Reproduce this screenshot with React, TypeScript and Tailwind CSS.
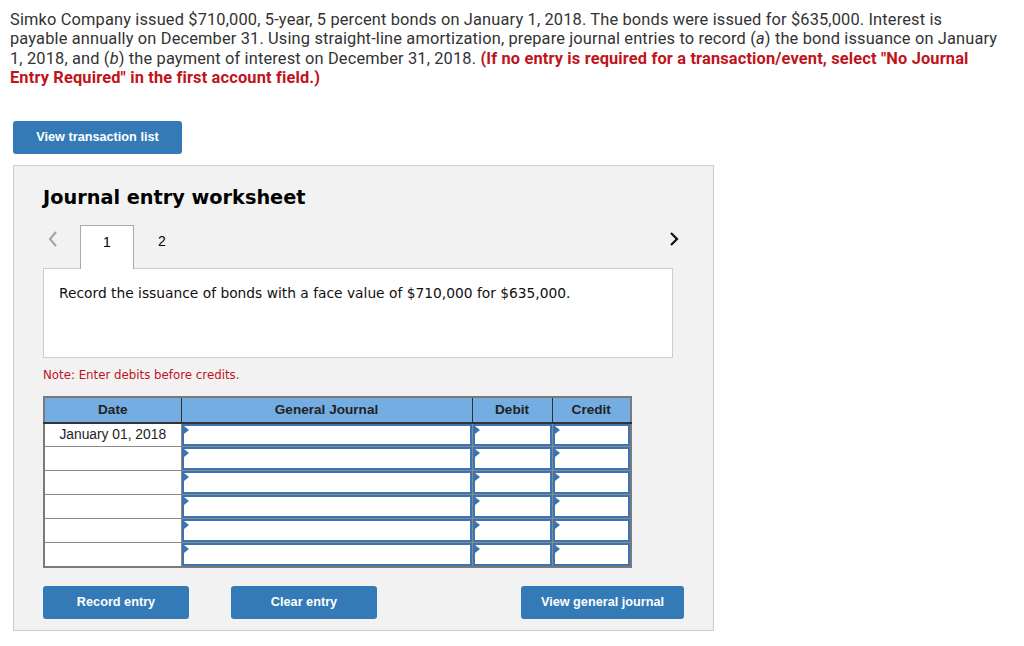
import React from 'react';

const blueBtn =
  'bg-[#337ab7] text-white font-bold text-[12.7px] rounded-[3px] h-[33px] flex items-center justify-center';

const InputCell: React.FC = () => (
  <td className="p-0 h-[24px] border border-[#8a8a8a] bg-white">
    <div className="relative h-full border-2 border-[#3b74b1] bg-white">
      <span className="absolute left-0 top-0 w-0 h-0 border-t-[4px] border-b-[4px] border-l-[5px] border-t-transparent border-b-transparent border-l-[#3b74b1]" />
    </div>
  </td>
);

const App: React.FC = () => {
  const rows = ['January 01, 2018', '', '', '', '', ''];

  return (
    <div className="w-[1024px] h-[646px] bg-white overflow-hidden">
      <p
        className="pl-[10px] pt-[10px] text-[16.4px] leading-[19.3px] tracking-[0.15px] text-[#333] whitespace-nowrap"
        style={{ fontFamily: 'Roboto, "Open Sans", sans-serif' }}
      >
        Simko Company issued $710,000, 5-year, 5 percent bonds on January 1, 2018. The bonds were issued for $635,000. Interest is
        <br />
        payable annually on December 31. Using straight-line amortization, prepare journal entries to record (<i>a</i>) the bond issuance on January
        <br />
        1, 2018, and (<i>b</i>) the payment of interest on December 31, 2018.{' '}
        <b className="text-[#c0141c]">
          (If no entry is required for a transaction/event, select "No Journal
          <br />
          Entry Required" in the first account field.)
        </b>
      </p>

      <div className="pl-[13px] pt-[34px]" style={{ fontFamily: '"Liberation Sans", Arial, sans-serif' }}>
        <button className={`${blueBtn} w-[169px]`}>View transaction list</button>
      </div>

      <div className="ml-[13px] mt-[11px] w-[701px] h-[466px] bg-[#f2f2f2] border border-[#cccccc] pl-[29px] pt-[20px]">
        <h2
          className="text-[19.3px] font-bold text-black leading-[24px]"
          style={{ fontFamily: '"DejaVu Sans", Verdana, sans-serif' }}
        >
          Journal entry worksheet
        </h2>

        <div
          className="mt-[14px] w-[630px] flex items-end h-[44px] relative"
          style={{ fontFamily: '"Liberation Sans", Arial, sans-serif' }}
        >
          <span className="w-[37px] h-full flex items-center pl-[4px] pb-[14px]">
            <svg width="12" height="18" viewBox="0 0 12 18">
              <path d="M9 2 L3 9 L9 16" fill="none" stroke="#a3a3a3" strokeWidth="2" />
            </svg>
          </span>
          <div className="w-[54px] h-[44px] bg-white border border-b-0 border-[#a9a9a9] flex justify-center pt-[6px] text-[14px] text-black -mb-[1px] relative z-10">
            1
          </div>
          <div className="w-[56px] h-full flex justify-center pt-[7px] text-[14px] text-black">2</div>
          <span className="ml-auto mr-[-7px] h-full flex items-center pb-[14px]">
            <svg width="12" height="18" viewBox="0 0 12 18">
              <path d="M3 3 L9 9 L3 15" fill="none" stroke="#111" strokeWidth="2.2" />
            </svg>
          </span>
        </div>

        <div
          className="w-[630px] h-[90px] bg-white border border-[#cccccc] pl-[15px] pt-[14px] text-[13.8px] text-[#111]"
          style={{ fontFamily: '"DejaVu Sans", Verdana, sans-serif' }}
        >
          Record the issuance of bonds with a face value of $710,000 for $635,000.
        </div>

        <p
          className="mt-[9px] text-[11.8px] text-[#c0141c]"
          style={{ fontFamily: '"DejaVu Sans", Verdana, sans-serif' }}
        >
          Note: Enter debits before credits.
        </p>

        <table
          className="mt-[11px] border-collapse border-2 border-[#7a7a7a] table-fixed"
          style={{ fontFamily: '"Liberation Sans", Arial, sans-serif', width: 587 }}
        >
          <colgroup>
            <col className="w-[137px]" />
            <col className="w-[291px]" />
            <col className="w-[80px]" />
            <col className="w-[79px]" />
          </colgroup>
          <thead>
            <tr className="bg-[#74ade2] h-[26px] text-[13.6px] font-bold text-[#222]">
              <th className="border border-[#333] border-b-2 font-bold">Date</th>
              <th className="border border-[#333] border-b-2 font-bold">General Journal</th>
              <th className="border border-[#333] border-b-2 font-bold">Debit</th>
              <th className="border border-[#333] border-b-2 font-bold">Credit</th>
            </tr>
          </thead>
          <tbody>
            {rows.map((d, i) => (
              <tr key={i} className="h-[24px]">
                <td className="border border-[#8a8a8a] bg-white text-center text-[13.8px] text-[#222] p-0">{d}</td>
                <InputCell />
                <InputCell />
                <InputCell />
              </tr>
            ))}
          </tbody>
        </table>

        <div
          className="mt-[18px] flex w-[641px]"
          style={{ fontFamily: '"Liberation Sans", Arial, sans-serif' }}
        >
          <button className={`${blueBtn} w-[146px]`}>Record entry</button>
          <button className={`${blueBtn} w-[146px] ml-[42px]`}>Clear entry</button>
          <button className={`${blueBtn} w-[163px] ml-auto`}>View general journal</button>
        </div>
      </div>
    </div>
  );
};

export default App;
